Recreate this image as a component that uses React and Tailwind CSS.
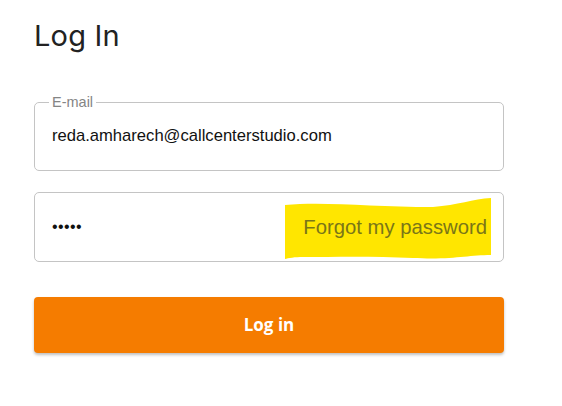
export default function App() {
  return (
    <div className="w-[562px] h-[406px] bg-white px-[34px] pt-[18px]">
      <h1 className="text-[29px] leading-[36px] text-[#222] font-['Inter',sans-serif] tracking-[0.2px]">
        Log In
      </h1>

      <div className="w-[470px] mt-[48px] flex flex-col gap-[21px] font-['Liberation_Sans',Arial,sans-serif]">
        {/* Email */}
        <fieldset className="relative h-[75px] -mt-[6px] border border-[#c4c4c4] rounded-[5px] px-[14px] pt-0 pb-0">
          <legend className="px-[3px] text-[14.5px] leading-[12px] text-[#858585]">E-mail</legend>
          <div className="pl-[3px] pt-[16px] text-[16.6px] text-[#111]">
            reda.amharech@callcenterstudio.com
          </div>
        </fieldset>

        {/* Password */}
        <div className="relative h-[70px] border border-[#c4c4c4] rounded-[5px] flex items-center justify-between pl-[17px] pr-[16px]">
          <span className="text-[16px] text-[#111] tracking-[0.4px]">•••••</span>
          <div className="absolute right-[10px] top-[2px]">
            <svg width="210" height="65" viewBox="0 0 210 65">
              <path
                d="M2 10 C40 6 90 12 150 12 C175 10 190 4 208 3 L208 60 C185 60 170 65 130 63 C90 61 50 62 20 62 C12 62 5 63 2 64 Z"
                fill="#ffe600"
              />
            </svg>
          </div>
          <span className="relative text-[20.3px] text-[#7a7618] mt-[1px]">Forgot my password</span>
        </div>

        {/* Button */}
        <button className="mt-[14px] h-[56px] w-full rounded-[4px] bg-[#f57c00] text-white text-[17px] font-bold font-['Open_Sans',sans-serif] shadow-[0_2px_3px_rgba(0,0,0,0.25)]">
          Log in
        </button>
      </div>
    </div>
  );
}
